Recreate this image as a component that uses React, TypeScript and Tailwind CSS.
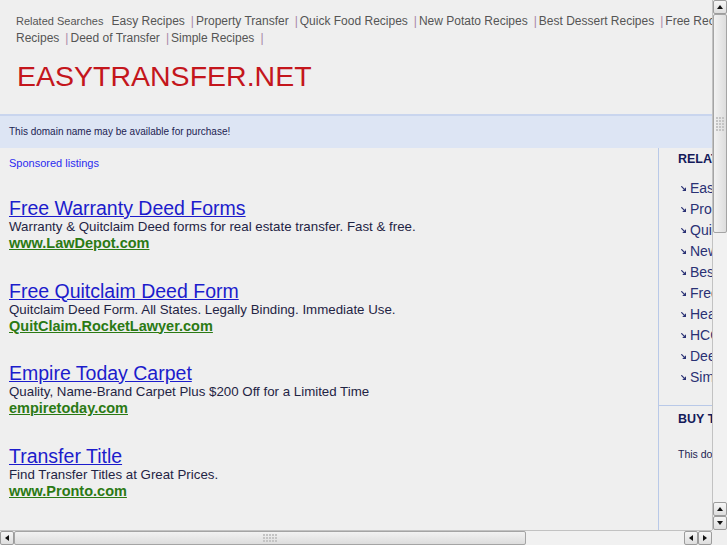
import React from "react";

const topLinks1 = [
  "Easy Recipes",
  "Property Transfer",
  "Quick Food Recipes",
  "New Potato Recipes",
  "Best Dessert Recipes",
  "Free Recipes",
  "Healthy Recipes",
  "HCG Diet",
];
const topLinks2 = ["Recipes", "Deed of Transfer", "Simple Recipes"];

const sideLinks = [
  "Easy Recipes",
  "Property Transfer",
  "Quick Food Recipes",
  "New Potato Recipes",
  "Best Dessert Recipes",
  "Free Recipes",
  "Healthy Recipes",
  "HCG Diet Recipes",
  "Deed of Transfer",
  "Simple Recipes",
];

const ads = [
  {
    title: "Free Warranty Deed Forms",
    desc: "Warranty & Quitclaim Deed forms for real estate transfer. Fast & free.",
    url: "www.LawDepot.com",
  },
  {
    title: "Free Quitclaim Deed Form",
    desc: "Quitclaim Deed Form. All States. Legally Binding. Immediate Use.",
    url: "QuitClaim.RocketLawyer.com",
  },
  {
    title: "Empire Today Carpet",
    desc: "Quality, Name-Brand Carpet Plus $200 Off for a Limited Time",
    url: "empiretoday.com",
  },
  {
    title: "Transfer Title",
    desc: "Find Transfer Titles at Great Prices.",
    url: "www.Pronto.com",
  },
];

function Grip({ horizontal }: { horizontal?: boolean }) {
  return (
    <div
      className={`grid gap-[1px] ${
        horizontal ? "grid-cols-5 grid-rows-3" : "grid-cols-3 grid-rows-5"
      }`}
    >
      {Array.from({ length: 15 }).map((_, i) => (
        <span key={i} className="w-[2px] h-[2px] bg-[#c4c4c4]" />
      ))}
    </div>
  );
}

function ArrowButton({ dir }: { dir: "up" | "down" | "left" | "right" }) {
  const pts = {
    up: "1,6 4,2 7,6",
    down: "1,2 4,6 7,2",
    left: "6,1 2,4 6,7",
    right: "2,1 6,4 2,7",
  }[dir];
  return (
    <div className="w-[14px] h-[14px] shrink-0 flex items-center justify-center bg-gradient-to-b from-[#f6f6f6] to-[#dedede] border border-[#9c9c9c] rounded-[2px]">
      <svg width="8" height="8" viewBox="0 0 8 8">
        <polygon points={pts} fill="#111" />
      </svg>
    </div>
  );
}

function VScrollbar() {
  return (
    <div className="w-[15px] h-full flex flex-col bg-[#ededed] border-l border-[#c2c2c2]">
      <ArrowButton dir="up" />
      <div className="h-[219px] shrink-0 flex items-center justify-center bg-gradient-to-r from-[#f2f2f2] to-[#dddddd] border border-[#a4a4a4] rounded-[2px]">
        <Grip />
      </div>
      <div className="flex-1 bg-[#f1f1f1]" />
      <ArrowButton dir="up" />
      <ArrowButton dir="down" />
    </div>
  );
}

function HScrollbar() {
  return (
    <div className="flex-1 h-[15px] flex bg-[#ededed] border-t border-[#c2c2c2]">
      <ArrowButton dir="left" />
      <div className="w-[512px] shrink-0 flex items-center justify-center bg-gradient-to-b from-[#f2f2f2] to-[#dddddd] border border-[#a4a4a4] rounded-[2px]">
        <Grip horizontal />
      </div>
      <div className="flex-1 bg-[#f1f1f1]" />
      <ArrowButton dir="left" />
      <ArrowButton dir="right" />
    </div>
  );
}

function SmallArrow() {
  return (
    <svg width="5" height="5" viewBox="0 0 5 5" className="shrink-0">
      <path d="M0.3 0.3 L3.2 3.2" stroke="#2a3174" strokeWidth="1.2" />
      <polygon points="5,1.2 5,5 1.2,5" fill="#2a3174" />
    </svg>
  );
}

export default function App() {
  return (
    <div className="w-[727px] h-[545px] flex flex-col overflow-hidden bg-[#efefef] font-['Liberation_Sans',Arial,sans-serif]">
      <div className="flex flex-1 min-h-0">
        <div className="flex-1 min-w-0 overflow-hidden">
          <div className="w-[930px]">
            {/* related searches */}
            <div className="pt-[13px] pl-4 text-[12px] leading-[17px] text-[#555] whitespace-nowrap">
              <div>
                <span className="text-[11px] mr-[8px]">Related Searches</span>
                {topLinks1.map((l, i) => (
                  <span key={l}>
                    {i > 0 && <span className="text-[#a888a8] mr-[2px] ml-[6px]">|</span>}
                    <a href="#" className="text-[#555]">
                      {l}
                    </a>
                  </span>
                ))}
              </div>
              <div>
                {topLinks2.map((l, i) => (
                  <span key={l}>
                    {i > 0 && <span className="text-[#a888a8] mr-[2px] ml-[6px]">|</span>}
                    <a href="#" className="text-[#555]">
                      {l}
                    </a>
                  </span>
                ))}
                <span className="text-[#a888a8] ml-[6px]">|</span>
              </div>
            </div>

            <h1 className="mt-[15px] mb-[24px] pl-[17px] text-[28.5px] leading-[28px] text-[#c4161c] font-normal">
              EASYTRANSFER.NET
            </h1>

            <div className="h-[34px] flex items-center pb-[1px] px-[9px] bg-[#dde5f4] border-t-2 border-[#c9d5ee] text-[10px] text-[#1c2352]">
              This domain name may be available for purchase!
            </div>

            <div className="flex">
              <div className="w-[658px] shrink-0 px-[9px] pt-[8px]">
                <div className="text-[11px] leading-[14px] text-[#2b2bef]">Sponsored listings</div>
                <div className="mt-[27px] flex flex-col gap-[27.5px]">
                  {ads.map((ad) => (
                    <div key={ad.title}>
                      <a href="#" className="block text-[19.5px] leading-[22px] text-[#1c1ccc] underline">
                        {ad.title}
                      </a>
                      <div className="text-[13.3px] leading-[16px] text-[#1f2444]">{ad.desc}</div>
                      <a href="#" className="block text-[14.5px] leading-[17px] font-bold text-[#2b7a14] underline">
                        {ad.url}
                      </a>
                    </div>
                  ))}
                </div>
              </div>

              <div className="flex-1 border-l border-[#b9c9e8] min-h-[400px]">
                <div className="pl-[19px] pt-[4px] pb-[17px]">
                  <div className="text-[12.5px] leading-[15px] font-bold text-[#141a5a]">RELATED SEARCHES</div>
                  <ul className="mt-[11px]">
                    {sideLinks.map((l) => (
                      <li key={l} className="flex items-center h-[21px] pl-[3px] gap-[4px]">
                        <SmallArrow />
                        <a href="#" className="text-[14px] text-[#2a3174]">
                          {l}
                        </a>
                      </li>
                    ))}
                  </ul>
                </div>
                <div className="border-t border-[#b9c9e8] pl-[19px] pt-[6px]">
                  <div className="text-[12.5px] leading-[15px] font-bold text-[#141a5a]">BUY THIS DOMAIN</div>
                  <div className="mt-[21px] text-[10.5px] leading-[13px] text-[#1c2352]">
                    This domain may be for sale. Buy this domain.
                  </div>
                </div>
              </div>
            </div>
          </div>
        </div>
        <VScrollbar />
      </div>
      <div className="flex h-[15px]">
        <HScrollbar />
        <div className="w-[15px] h-[15px] bg-[#efefef]" />
      </div>
    </div>
  );
}
